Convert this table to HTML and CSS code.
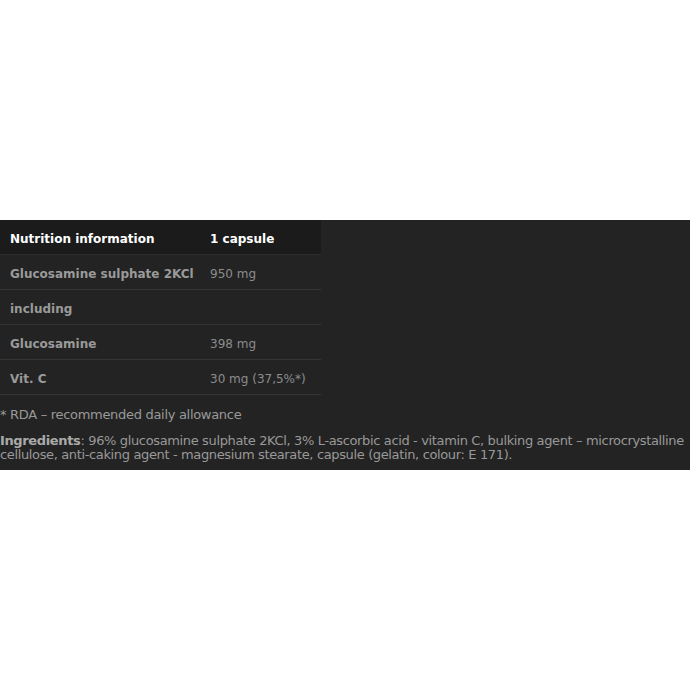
FILE: index.html
```html
<!DOCTYPE html>
<html lang="en">
<head>
    <meta charset="UTF-8">
    <title>Nutrition information</title>
    <link rel="stylesheet" href="styles.css">
</head>
<body>
    <div class="panel">
        <table class="nutrition">
            <tr class="head">
                <th>Nutrition information</th>
                <th>1 capsule</th>
            </tr>
            <tr>
                <td class="label">Glucosamine sulphate 2KCl</td>
                <td>950 mg</td>
            </tr>
            <tr>
                <td class="label">including</td>
                <td></td>
            </tr>
            <tr>
                <td class="label">Glucosamine</td>
                <td>398 mg</td>
            </tr>
            <tr>
                <td class="label">Vit. C</td>
                <td>30 mg (37,5%*)</td>
            </tr>
        </table>
        <p class="note">* RDA – recommended daily allowance</p>
        <p class="ingredients"><b>Ingredients</b>: 96% glucosamine sulphate 2KCl, 3% L-ascorbic acid - vitamin C, bulking agent – microcrystalline cellulose, anti-caking agent - magnesium stearate, capsule (gelatin, colour: E 171).</p>
    </div>
</body>
</html>
```

FILE: styles.css
```css
body {
    margin: 0;
    padding: 0;
    background: #fff;
    font-family: "DejaVu Sans", Verdana, sans-serif;
}
.panel {
    margin-top: 220px;
    height: 250px;
    background: #232323;
    color: #999;
    font-size: 12px;
    overflow: hidden;
}
.nutrition {
    width: 321px;
    border-collapse: collapse;
}
.nutrition th,
.nutrition td {
    height: 31px;
    padding: 3px 0 0 10px;
    text-align: left;
    border-bottom: 1px solid #363636;
    color: #8c8c8c;
}
.nutrition th {
    background: #1b1b1b;
    color: #fff;
    font-weight: bold;
    border-bottom-color: #2e2e2e;
}
.nutrition th:first-child,
.nutrition td:first-child {
    width: 190px;
}
.nutrition td.label {
    font-weight: bold;
    color: #9a9a9a;
}
.note {
    margin: 12px 0 0 0;
    font-size: 13px;
    letter-spacing: -0.3px;
}
.ingredients {
    margin: 12px 0 0 0;
    font-size: 13px;
    line-height: 14px;
    letter-spacing: -0.36px;
}
.ingredients b {
    color: #aaa;
}
```
